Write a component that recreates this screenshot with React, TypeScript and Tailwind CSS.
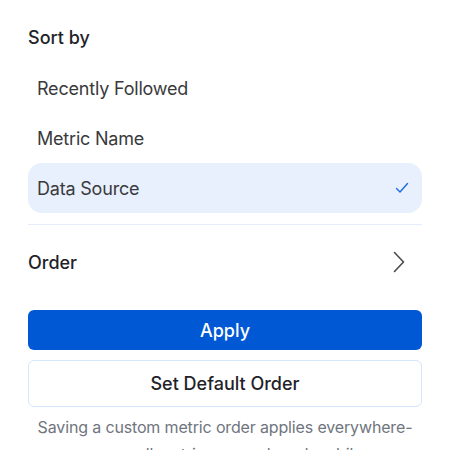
import React from 'react';

const options = ['Recently Followed', 'Metric Name', 'Data Source'];

export default function App() {
  const selected = 'Data Source';

  return (
    <div
      className="w-[450px] h-[450px] overflow-hidden bg-white px-7 pt-6"
      style={{ fontFamily: 'Inter, "Noto Sans", sans-serif' }}
    >
      <div className="text-[18px] leading-[28px] font-medium text-[#1f2329]">Sort by</div>

      <div className="mt-[11px] flex flex-col">
        {options.map((opt) => {
          const active = opt === selected;
          return (
            <div
              key={opt}
              className={`h-[50px] flex items-center justify-between pl-[9px] pr-[13px] rounded-[14px] ${
                active ? 'bg-[#e8f0fd]' : ''
              }`}
            >
              <span className="text-[18px] tracking-[-0.2px] text-[#3a3a3c]">{opt}</span>
              {active && (
                <svg width="14" height="12" viewBox="0 0 14 12" fill="none">
                  <path d="M1.5 6.5 L5 10 L12.5 1.5" stroke="#1d6ae5" strokeWidth="1.4" strokeLinecap="round" strokeLinejoin="round" />
                </svg>
              )}
            </div>
          );
        })}
      </div>

      <div className="mt-[11px] h-px bg-[#e3edfb]" />

      <div className="h-[74px] flex items-center justify-between pr-[17px]">
        <span className="text-[18px] font-medium text-[#1f2329]">Order</span>
        <svg width="12" height="22" viewBox="0 0 12 22" fill="none">
          <path d="M1.5 1.5 L10.5 11 L1.5 20.5" stroke="#4a4a4f" strokeWidth="1.6" strokeLinecap="round" strokeLinejoin="round" />
        </svg>
      </div>

      <button className="mt-[11px] w-full h-10 rounded-md bg-[#0058d5] text-white text-[18px] font-medium">
        Apply
      </button>

      <button className="mt-[10px] w-full h-[47px] rounded-md border border-[#d6e6fb] bg-white text-[#1f2329] text-[18px] font-medium">
        Set Default Order
      </button>

      <p className="mt-[7px] text-center text-[16px] leading-[27px] tracking-[-0.15px] text-[#70757e]">
        Saving a custom metric order applies everywhere-across all metrics, on web and mobile.
      </p>
    </div>
  );
}
